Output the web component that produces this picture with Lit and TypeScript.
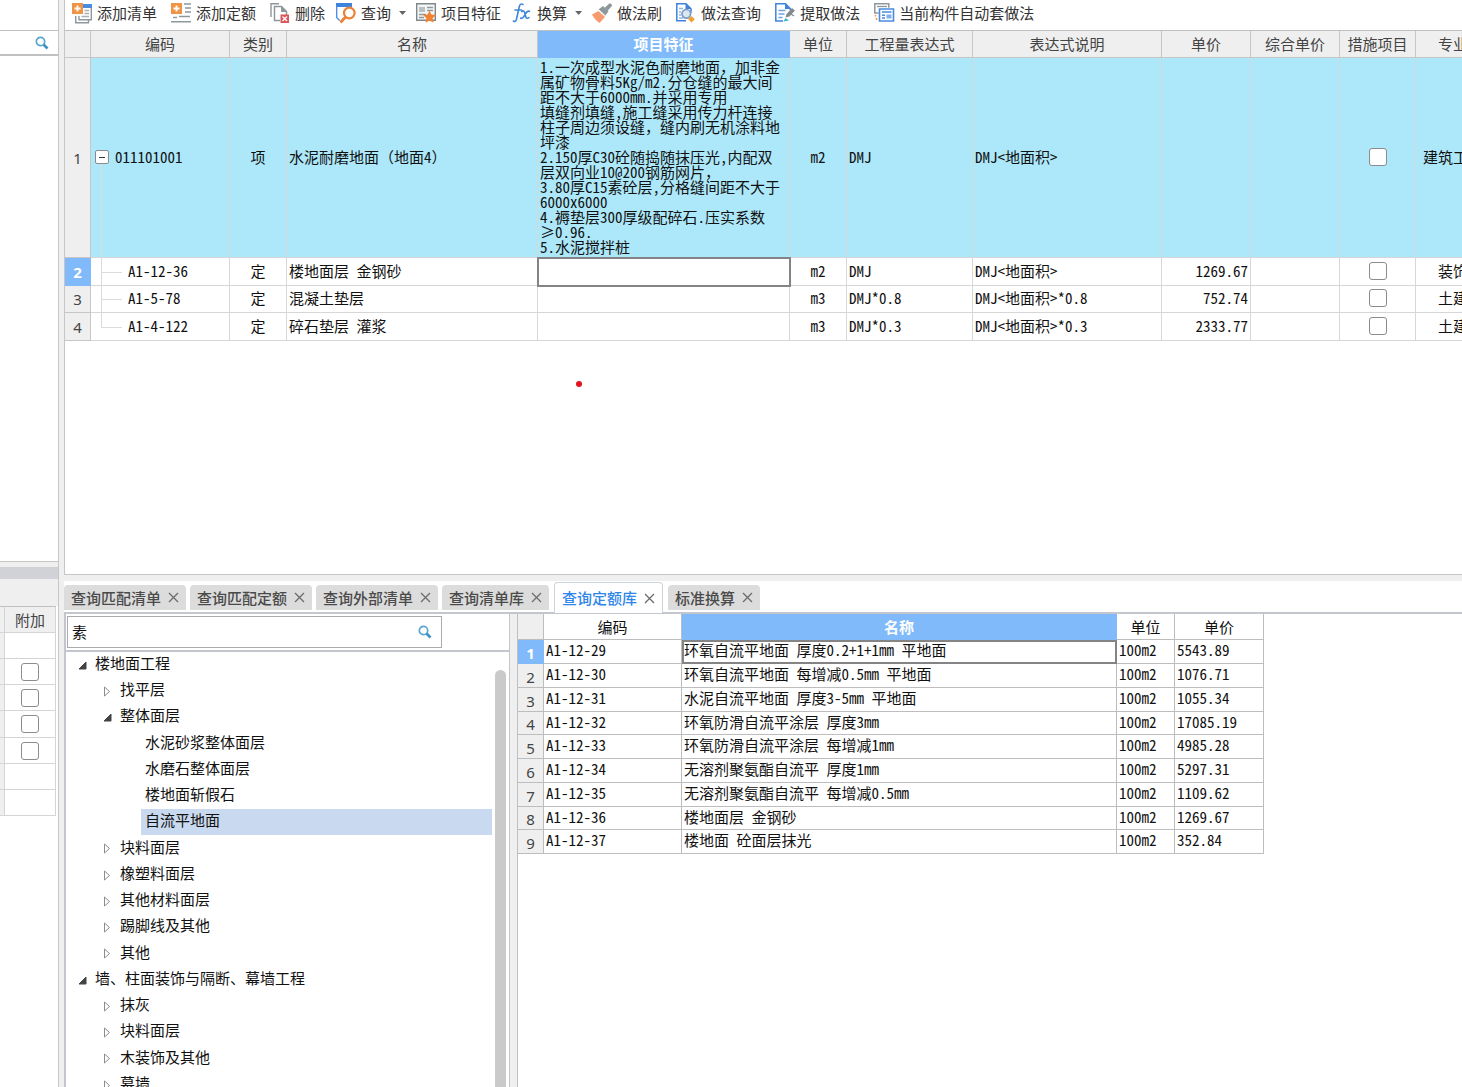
import { LitElement, html, css, svg, nothing } from "lit";
import { customElement } from "lit/decorators.js";
import { classMap } from "lit/directives/class-map.js";

const icons: Record<string, unknown> = {
  addList: svg`
    <path d="M11 1h9v4h-9z" fill="#4a8be0"/>
    <path d="M3.700 13v6.800H16.500V17" fill="none" stroke="#8e979b" stroke-width="1.400"/>
    <path d="M7 13v3.800h12.300V5" fill="none" stroke="#8e979b" stroke-width="1.400"/>
    <path d="M12.500 7.500h4.500M12.500 10.500h4.500M9.500 13.500H17" stroke="#a8b0b3" stroke-width="1.300"/>
    <path d="M0 0h11v11H0z" fill="#ee9444"/>
    <path d="M5.500 2.500v6M2.500 5.500h6" stroke="#fff" stroke-width="1.800"/>`,
  addQuota: svg`
    <path d="M13 1h7M14 5h6M14 9h6M8 13.500h11M0 18.800h20" stroke="#8e979b" stroke-width="1.600"/>
    <path d="M2 14.500h4" stroke="#8e979b" stroke-width="1.400"/>
    <path d="M0 0h11v11H0z" fill="#ee9444"/>
    <path d="M5.500 2.500v6M2.500 5.500h6" stroke="#fff" stroke-width="1.800"/>`,
  remove: svg`
    <path d="M1 14V.800h8" fill="none" stroke="#8e979b" stroke-width="1.400"/>
    <path d="M10 17.500H4.500V3.500h7l5 5v3.500" fill="#fff" stroke="#8e979b" stroke-width="1.500"/>
    <path d="M11 3v6h6z" fill="#8e979b"/>
    <path d="M10.500 11.500h8.500V20h-8.500z" fill="#d9575a"/>
    <path d="M12.500 13.500l4.500 4.500M17 13.500L12.500 18" stroke="#fff" stroke-width="1.300"/>`,
  query: svg`
    <path d="M0 0h16v4H0z" fill="#3f82dc"/>
    <path d="M.700 3v11.500l3 3M15.300 3.500v2" fill="none" stroke="#4a8be0" stroke-width="1.300"/>
    <circle cx="13.300" cy="10" r="5.300" fill="#fff" stroke="#ee8133" stroke-width="2.200"/>
    <path d="M9.500 14L4.500 19.500" stroke="#ee8133" stroke-width="2.800"/>`,
  feature: svg`
    <path d="M.700.700h18.600v16.600H.700z" fill="#f4f5f5" stroke="#7f888c" stroke-width="1.400"/>
    <path d="M3 4h6v5H3z" fill="#b9bfc2"/>
    <path d="M11 4.500h6M11 7.500h6M3 11.500h7M3 14.500h5" stroke="#8e979b" stroke-width="1.300"/>
    <path d="M13.500 7.500l1.900 4.100 4.500.5-3.300 3.100.9 4.500-4-2.300-4 2.300.9-4.500-3.300-3.100 4.500-.5z" fill="#f08230"/>`,
  formula: svg`
    <path d="M11 1.500C9.500.300 8 1.200 7.400 3.300L4.400 16.500c-.5 2-1.700 2.500-3 1.500M3 7h6.500" fill="none" stroke="#3f86d8" stroke-width="1.600" stroke-linecap="round"/>
    <path d="M9.700 8.500c2-1.500 2.900 0 3.400 2.700s1.300 5.500 3.900 3.300M17.500 8.300c-2-.800-3.300 1-4.500 3.400s-2.200 4.300-4.300 3.500" fill="none" stroke="#3f86d8" stroke-width="1.600" stroke-linecap="round"/>`,
  brush: svg`
    <path d="M0 11.500L6.500 8l6.500 6-5.500 6C5 18.500 2 15.500 0 11.500z" fill="#f79a70"/>
    <path d="M6.500 6.500l4.500-3.500 5.500 5.500-3.500 4.500z" fill="#8e979b"/>
    <path d="M12.500 5L17 .800c1.600-1.200 3.600.4 2.600 2.400L15.500 8z" fill="#8e979b"/>
    <path d="M7 7l6.500 6" stroke="#fff" stroke-width="1"/>`,
  docSearch: svg`
    <path d="M10 17.800H.800V.800H10l5 5v4" fill="#fff" stroke="#3f82dc" stroke-width="1.500"/>
    <path d="M9.500.500v5.500H15z" fill="#3f82dc"/>
    <path d="M3 5.500h4M3 9h2M3 12h2M3 15h4" stroke="#8fb6ea" stroke-width="1.300"/>
    <circle cx="10.300" cy="10.800" r="4.300" fill="#dbe6f3" stroke="#7f9cc0" stroke-width="1.700"/>
    <path d="M15.500 13l3.300 3.300-3.300 3.300-3.300-3.300z" fill="#f2a02c"/>`,
  extract: svg`
    <path d="M8 18H.800V.800H10.500l4.700 4.700V7" fill="#fff" stroke="#3f82dc" stroke-width="1.500"/>
    <path d="M10 .500v5.500h5.500z" fill="#3f82dc"/>
    <path d="M3.500 7.500h7M3.500 11h6M3.500 14.500h4" stroke="#6fa2e6" stroke-width="1.500"/>
    <path d="M10.500 14.500l1-3.500L17 5l3 2.500-5.500 6z" fill="#848b8f"/>
    <path d="M8.500 18.500l2-3.500 3.500 2.500z" fill="#35b5c5"/>
    <path d="M16 11l3 2" stroke="#848b8f" stroke-width="1.400"/>`,
  auto: svg`
    <path d="M4.500 10H.800V.800h14v4" fill="#fff" stroke="#8e979b" stroke-width="1.500"/>
    <path d="M3 3.500h10" stroke="#8e979b" stroke-width="1.300"/>
    <path d="M5.500 6h14v12h-14z" fill="#fff" stroke="#4a8be0" stroke-width="1.600"/>
    <path d="M8 9h9.500M8 12.200h3M8 15h3" stroke="#4a8be0" stroke-width="1.500"/>
    <path d="M12.500 11.500h5v4h-5z" fill="#7fb0f0"/>
    <path d="M1.500 12v1.500M2.500 15v2" stroke="#ee9444" stroke-width="1.500"/>`,
};

const tools = [
  { icon: "addList", label: "添加清单" },
  { icon: "addQuota", label: "添加定额" },
  { icon: "remove", label: "删除" },
  { icon: "query", label: "查询", menu: true },
  { icon: "feature", label: "项目特征" },
  { icon: "formula", label: "换算", menu: true },
  { icon: "brush", label: "做法刷" },
  { icon: "docSearch", label: "做法查询" },
  { icon: "extract", label: "提取做法" },
  { icon: "auto", label: "当前构件自动套做法" },
];

const featureText = `1.一次成型水泥色耐磨地面，加非金
属矿物骨料5Kg/m2.分仓缝的最大间
距不大于6000mm.并采用专用
填缝剂填缝,施工缝采用传力杆连接
柱子周边须设缝，缝内刷无机涂料地
坪漆
2.150厚C30砼随捣随抹压光,内配双
层双向业10@200钢筋网片，
3.80厚C15素砼层,分格缝间距不大于
6000x6000
4.褥垫层300厚级配碎石.压实系数
≥0.96.
5.水泥搅拌桩`;

const methods = [
  { code: "011101001", kind: "项", name: "水泥耐磨地面（地面4）", feature: featureText, unit: "m2", expr: "DMJ", note: "DMJ<地面积>", price: "", field: "建筑工程" },
  { code: "A1-12-36", kind: "定", name: "楼地面层 金钢砂", feature: "", unit: "m2", expr: "DMJ", note: "DMJ<地面积>", price: "1269.67", field: "装饰" },
  { code: "A1-5-78", kind: "定", name: "混凝土垫层", feature: "", unit: "m3", expr: "DMJ*0.8", note: "DMJ<地面积>*0.8", price: "752.74", field: "土建" },
  { code: "A1-4-122", kind: "定", name: "碎石垫层 灌浆", feature: "", unit: "m3", expr: "DMJ*0.3", note: "DMJ<地面积>*0.3", price: "2333.77", field: "土建" },
];

const tabs = ["查询匹配清单", "查询匹配定额", "查询外部清单", "查询清单库", "查询定额库", "标准换算"];
const activeTab = "查询定额库";

type Node = { level: number; label: string; open?: boolean; leaf?: boolean; selected?: boolean };
const nodes: Node[] = [
  { level: 1, label: "楼地面工程", open: true },
  { level: 2, label: "找平层" },
  { level: 2, label: "整体面层", open: true },
  { level: 3, label: "水泥砂浆整体面层", leaf: true },
  { level: 3, label: "水磨石整体面层", leaf: true },
  { level: 3, label: "楼地面斩假石", leaf: true },
  { level: 3, label: "自流平地面", leaf: true, selected: true },
  { level: 2, label: "块料面层" },
  { level: 2, label: "橡塑料面层" },
  { level: 2, label: "其他材料面层" },
  { level: 2, label: "踢脚线及其他" },
  { level: 2, label: "其他" },
  { level: 1, label: "墙、柱面装饰与隔断、幕墙工程", open: true },
  { level: 2, label: "抹灰" },
  { level: 2, label: "块料面层" },
  { level: 2, label: "木装饰及其他" },
  { level: 2, label: "幕墙" },
];

const quotas = [
  ["A1-12-29", "环氧自流平地面 厚度0.2+1+1mm 平地面", "5543.89"],
  ["A1-12-30", "环氧自流平地面 每增减0.5mm 平地面", "1076.71"],
  ["A1-12-31", "水泥自流平地面 厚度3-5mm 平地面", "1055.34"],
  ["A1-12-32", "环氧防滑自流平涂层 厚度3mm", "17085.19"],
  ["A1-12-33", "环氧防滑自流平涂层 每增减1mm", "4985.28"],
  ["A1-12-34", "无溶剂聚氨酯自流平 厚度1mm", "5297.31"],
  ["A1-12-35", "无溶剂聚氨酯自流平 每增减0.5mm", "1109.62"],
  ["A1-12-36", "楼地面层 金钢砂", "1269.67"],
  ["A1-12-37", "楼地面 砼面层抹光", "352.84"],
];

const base = css`
  * { box-sizing: border-box; }
  button, input { font: inherit; color: inherit; margin: 0; padding: 0; border: 0; background: none; }
  table { border-collapse: separate; border-spacing: 0; table-layout: fixed; }
  th { font-weight: 400; padding: 0; }
  .check {
    appearance: none; display: block; width: 18px; height: 18px; margin: 0 auto;
    border: 1px solid #8c8c8c; border-radius: 3px; background: #fff;
  }
  .search { display: flex; align-items: center; background: #fff; }
  .search input { flex: 1; min-width: 0; outline: none; }
  .search button { display: flex; flex: none; }
`;

const magnifier = html`<svg width="14" height="14" viewBox="0 0 14 14">
  <circle cx="5.500" cy="5.500" r="4.200" fill="none" stroke="#58a6cf" stroke-width="1.700"/>
  <path d="M8.500 8.500L12.500 12.500" stroke="#3c93c4" stroke-width="2.600"/>
</svg>`;

@customElement("side-panel")
class SidePanel extends LitElement {
  static styles = [base, css`
    :host {
      display: grid; grid-template-columns: minmax(0, 1fr);
      grid-template-rows: minmax(0, 562fr) 5px minmax(0, 520fr);
      min-width: 0; overflow: hidden; border-right: 1px solid #c6c6c6;
    }
    .upper { background: #fff; border-bottom: 1px solid #c6c6c6; padding-top: 30px; }
    .search { height: 26px; padding-right: 9px; border: solid #c0c0c0; border-width: 1px 0 2px; }
    .lower { display: flex; flex-direction: column; background: #fff; min-height: 0; }
    .caption { height: 12px; flex: none; background: #d0d2d8; }
    .strip { height: 27px; flex: none; background: #efefef; }
    table { width: 56px; border-top: 1px solid #c0c0c0; }
    .edge { width: 5px; }
    th, td { height: 26px; border-right: 1px solid #d4d4d4; border-bottom: 1px solid #d4d4d4; }
    th { background: #efefef; color: #444; }
    tr:nth-child(4n) td { height: 27px; }
    .edge-cell { background: #efefef; }
    td { padding: 0; }
  `];
  render() {
    const rows = [false, true, true, true, true, false, false];
    return html`
      <div class="upper">
        <div class="search">
          <input type="text" aria-label="搜索构件">
          <button aria-label="搜索">${magnifier}</button>
        </div>
      </div>
      <div></div>
      <div class="lower">
        <div class="caption"></div>
        <div class="strip"></div>
        <table>
          <colgroup><col class="edge"><col></colgroup>
          <thead><tr><th></th><th scope="col">附加</th></tr></thead>
          <tbody>${rows.map((box) => html`<tr>
            <td class="edge-cell"></td>
            <td>${box ? html`<input class="check" type="checkbox" aria-label="附加">` : nothing}</td>
          </tr>`)}</tbody>
        </table>
      </div>`;
  }
}

@customElement("method-pane")
class MethodPane extends LitElement {
  static styles = [base, css`
    :host {
      display: flex; flex-direction: column; position: relative; min-width: 0; overflow: hidden;
      background: #fff; border: solid #c6c6c6; border-width: 0 0 1px 1px;
    }
    .toolbar { display: flex; flex: none; align-items: center; gap: 14px; height: 30px; padding: 0 7px 4px; color: #333; }
    .tool { display: flex; flex: none; align-items: center; gap: 5px; line-height: 22px; white-space: nowrap; }
    .tool svg { flex: none; overflow: visible; }
    .menu { margin: 0 -4px 0 -3px; }
    .caret { width: 7px; height: 4px; margin-left: 3px; background: #666; clip-path: polygon(0 0, 100% 0, 50% 100%); }
    .scroller { flex: 1; min-height: 0; overflow: hidden; border-top: 1px solid #c0c0c0; }
    table { width: 1426px; }
    th, td { border-right: 1px solid #d3d9db; border-bottom: 1px solid #d6d6d6; }
    thead th { height: 27px; background: #efefef; color: #444; border-color: #c6c6c6; }
    thead .current, tbody .current { background: #80bafa; border-color: #80bafa; color: #fff; font-weight: 700; }
    tbody th { background: #efefef; border-color: #c6c6c6; color: #444; font-family: var(--digit-font); }
    td { height: 28px; padding: 0 2px 2px; font-family: var(--cell-font); white-space: pre; overflow: hidden; }
    tr:nth-child(3) td { height: 27px; }
    .group td { height: 200px; background: #ade8fa; line-height: 15px; }
    .mid { text-align: center; }
    .num { text-align: right; }
    .code { position: relative; padding-left: 37px; }
    .group .code { padding-left: 24px; }
    .code::before { content: ""; position: absolute; left: 10px; top: 0; bottom: 0; border-left: 1px solid #dcdcdc; }
    .group .code::before { top: 50%; }
    .last .code::before { bottom: 50%; }
    .leaf .code::after { content: ""; position: absolute; left: 10px; top: 50%; width: 21px; border-top: 1px solid #dcdcdc; }
    .toggle {
      position: absolute; z-index: 1; left: 4px; top: 92px; width: 14px; height: 14px;
      border: 1px solid #8c8c8c; border-radius: 2px; background: #fff;
    }
    .toggle::before { content: ""; display: block; width: 6px; height: 1px; margin: 0 auto; background: #333; }
    .focus { outline: 2px solid #848484; outline-offset: -1px; }
    .dot { position: absolute; left: 511px; top: 381px; width: 6px; height: 6px; border-radius: 50%; background: #e3141e; }
    .w-num { width: 26px; } .w-code { width: 139px; } .w-kind { width: 57px; } .w-name { width: 251px; }
    .w-feature { width: 252px; } .w-unit { width: 57px; } .w-expr { width: 126px; } .w-note { width: 189px; }
    .w-price { width: 89px; } .w-check { width: 76px; } .w-field { width: 75px; }
  `];
  render() {
    const cols = ["num", "code", "kind", "name", "feature", "unit", "expr", "note", "price", "price", "check", "field"];
    const heads = ["", "编码", "类别", "名称", "项目特征", "单位", "工程量表达式", "表达式说明", "单价", "综合单价", "措施项目", "专业"];
    return html`
      <div class="toolbar" role="toolbar">
        ${tools.map((t) => html`<button class=${classMap({ tool: true, menu: !!t.menu })}>
          <svg width="20" height="20" viewBox="0 0 20 20" aria-hidden="true">${icons[t.icon]}</svg>
          <span>${t.label}</span>${t.menu ? html`<i class="caret"></i>` : nothing}
        </button>`)}
      </div>
      <div class="scroller">
        <table>
          <colgroup>${cols.map((c) => html`<col class="w-${c}">`)}</colgroup>
          <thead><tr>${heads.map((h) => html`<th scope="col" class=${classMap({ current: h === "项目特征" })}>${h}</th>`)}</tr></thead>
          <tbody>${methods.map((m, i) => html`<tr class=${classMap({ group: i === 0, leaf: i > 0, last: i === methods.length - 1 })}>
            <th scope="row" class=${classMap({ current: i === 1 })}>${i + 1}</th>
            <td class="code">${i === 0 ? html`<button class="toggle" aria-label="折叠"></button>` : nothing}${m.code}</td>
            <td class="mid">${m.kind}</td>
            <td>${m.name}</td>
            <td class=${classMap({ focus: i === 1 })}>${m.feature}</td>
            <td class="mid">${m.unit}</td>
            <td>${m.expr}</td>
            <td>${m.note}</td>
            <td class="num">${m.price}</td>
            <td></td>
            <td><input class="check" type="checkbox" aria-label="措施项目"></td>
            <td class="mid">${m.field}</td>
          </tr>`)}</tbody>
        </table>
      </div>
      <span class="dot"></span>`;
  }
}

@customElement("quota-tree")
class QuotaTree extends LitElement {
  static styles = [base, css`
    :host {
      display: flex; flex-direction: column; width: 446px; flex: none; min-height: 0; overflow: hidden;
      background: #fff; border: solid #c3c7cd; border-width: 0 1px 0 2px;
    }
    .bar { flex: none; padding: 2px 67px 2px 1px; border-bottom: 2px solid #c3c7cd; }
    .search { height: 32px; padding: 0 9px 0 4px; border: 1px solid #ababab; font-family: var(--cell-font); }
    .body { display: flex; flex: 1; min-height: 0; gap: 3px; }
    ul { flex: 1; min-width: 0; margin: 0; padding: 0; list-style: none; overflow: hidden; }
    li { display: flex; align-items: center; height: 26px; }
    li:nth-child(4n) { height: 27px; }
    .l2 { padding-left: 25px; }
    .l3 { padding-left: 75px; }
    .arrow { display: flex; align-items: center; justify-content: center; width: 12px; height: 26px; margin: 0 7px 0 10px; }
    .label { flex: 1; height: 26px; line-height: 22px; white-space: nowrap; color: #111; }
    .l3 .label { padding-left: 4px; }
    .selected { background: #c9d9ef; }
    .thumb { width: 11px; margin: 18px 3px 0 0; border-radius: 6px 6px 0 0; background: #cacaca; }
  `];
  render() {
    return html`
      <div class="bar"><div class="search">
        <input type="text" aria-label="查询定额" .value=${"素"}>
        <button aria-label="搜索">${magnifier}</button>
      </div></div>
      <div class="body">
        <ul role="tree">${nodes.map((n) => html`<li class="l${n.level}" role="treeitem" aria-level=${n.level}>
          ${n.leaf ? nothing : html`<span class="arrow">${n.open
            ? html`<svg width="9" height="9" viewBox="0 0 9 9"><path d="M8 1v7H1z" fill="#444" stroke="#444" stroke-linejoin="round"/></svg>`
            : html`<svg width="8" height="11" viewBox="0 0 8 11"><path d="M1.500 1v9l5-4.500z" fill="none" stroke="#8c8c8c"/></svg>`}</span>`}
          <span class=${classMap({ label: true, selected: !!n.selected })}>${n.label}</span>
        </li>`)}</ul>
        <div class="thumb"></div>
      </div>`;
  }
}

@customElement("quota-pane")
class QuotaPane extends LitElement {
  static styles = [base, css`
    :host { display: flex; flex-direction: column; min-width: 0; min-height: 0; overflow: hidden; background: #fff; }
    .tabs { display: flex; flex: none; align-items: flex-end; gap: 4px; height: 33px; border-bottom: 2px solid #c3c7cd; }
    .tab { display: flex; align-items: center; gap: 7px; height: 25px; margin-bottom: 2px; padding: 0 7px; background: #dcdcdc; border-radius: 4px 4px 0 0; color: #4a4a4a; font-weight: 500; white-space: nowrap; }
    .tab button { display: flex; }
    .active { height: 31px; margin: 0 1px -1px; background: #fff; border: 1px solid #cdd3da; border-bottom: 0; color: #2f86ea; }
    .split { display: flex; flex: 1; min-height: 0; }
    .divider { width: 7px; flex: none; background: #efefef; }
    .list { flex: 1; min-width: 0; overflow: hidden; border-left: 1px solid #c0c0c0; }
    table { width: 746px; font-family: var(--cell-font); }
    th, td { border-right: 1px solid #bdbdbd; border-bottom: 1px solid #bdbdbd; }
    thead th { height: 26px; color: #111; }
    .corner, tbody th { background: #efefef; }
    tbody th { color: #444; font-family: var(--digit-font); line-height: 18px; padding-top: 2px; }
    thead .current, tbody .current { background: #80bafa; border-color: #80bafa; color: #fff; font-weight: 700; }
    td { height: 24px; padding: 0 2px 3px; line-height: 18px; white-space: pre; overflow: hidden; }
    tr:nth-child(4n) td { height: 23px; }
    .focus { outline: 2px solid #848484; outline-offset: -2px; }
    .w-num { width: 26px; } .w-code { width: 138px; } .w-name { width: 435px; } .w-unit { width: 58px; } .w-price { width: 89px; }
  `];
  render() {
    return html`
      <div class="tabs" role="tablist">
        ${tabs.map((t) => html`<div class=${classMap({ tab: true, active: t === activeTab })}>
          <button role="tab" aria-selected=${t === activeTab}>${t}</button>
          <button aria-label="关闭${t}"><svg width="11" height="11" viewBox="0 0 11 11"><path d="M1 1l9 9M10 1L1 10" stroke="#6c6c6c" stroke-width="1.300"/></svg></button>
        </div>`)}
      </div>
      <div class="split">
        <quota-tree></quota-tree>
        <div class="divider"></div>
        <div class="list">
          <table>
            <colgroup><col class="w-num"><col class="w-code"><col class="w-name"><col class="w-unit"><col class="w-price"></colgroup>
            <thead><tr>
              <th class="corner"></th><th scope="col">编码</th><th scope="col" class="current">名称</th>
              <th scope="col">单位</th><th scope="col">单价</th>
            </tr></thead>
            <tbody>${quotas.map(([code, name, price], i) => html`<tr>
              <th scope="row" class=${classMap({ current: i === 0 })}>${i + 1}</th>
              <td>${code}</td><td class=${classMap({ focus: i === 0 })}>${name}</td><td>100m2</td><td>${price}</td>
            </tr>`)}</tbody>
          </table>
        </div>
      </div>`;
  }
}

@customElement("app-root")
class AppRoot extends LitElement {
  static styles = css`
    :host {
      --ui-font: "Noto Sans CJK SC", "Noto Sans", sans-serif;
      --digit-font: "Noto Sans", sans-serif;
      --cell-font: "Noto Sans Mono CJK SC", "Noto Sans CJK SC", monospace;
      display: grid; grid-template: minmax(0, 1fr) / 59px 5px minmax(0, 1fr); height: 100vh;
      overflow: hidden; background: #efefef; color: #111; font: 15px/20px var(--ui-font);
    }
    .main {
      display: grid; grid-template-columns: minmax(0, 1fr);
      grid-template-rows: minmax(0, 575fr) 6px minmax(0, 506fr); min-width: 0;
    }
  `;
  render() {
    return html`
      <side-panel></side-panel>
      <div></div>
      <div class="main">
        <method-pane></method-pane>
        <div></div>
        <quota-pane></quota-pane>
      </div>`;
  }
}
